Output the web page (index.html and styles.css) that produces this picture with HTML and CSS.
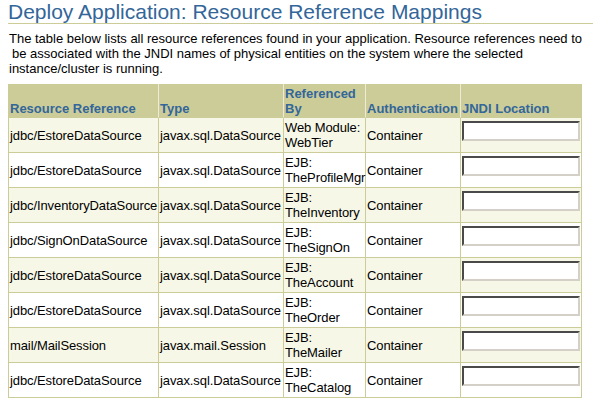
FILE: index.html
```html
<!DOCTYPE html>
<html>
<head>
<meta charset="utf-8">
<title>Deploy Application</title>
<link rel="stylesheet" href="styles.css">
</head>
<body>
<h1 class="title">Deploy Application: Resource Reference Mappings</h1>
<div class="intro">
  <div class="line">The table below lists all resource references found in your application. Resource references need to</div>
  <div class="line indent">be associated with the JNDI names of physical entities on the system where the selected</div>
  <div class="line">instance/cluster is running.</div>
</div>
<table class="map">
  <thead>
    <tr>
      <th class="c1">Resource Reference</th>
      <th class="c2">Type</th>
      <th class="c3">Referenced By</th>
      <th class="c4">Authentication</th>
      <th class="c5">JNDI Location</th>
    </tr>
  </thead>
  <tbody>
    <tr class="odd"><td>jdbc/EstoreDataSource</td><td>javax.sql.DataSource</td><td>Web Module:<br>WebTier</td><td>Container</td><td class="jndi"><input class="field" type="text"></td></tr>
    <tr><td>jdbc/EstoreDataSource</td><td>javax.sql.DataSource</td><td>EJB:<br>TheProfileMgr</td><td>Container</td><td class="jndi"><input class="field" type="text"></td></tr>
    <tr class="odd"><td>jdbc/InventoryDataSource</td><td>javax.sql.DataSource</td><td>EJB:<br>TheInventory</td><td>Container</td><td class="jndi"><input class="field" type="text"></td></tr>
    <tr><td>jdbc/SignOnDataSource</td><td>javax.sql.DataSource</td><td>EJB:<br>TheSignOn</td><td>Container</td><td class="jndi"><input class="field" type="text"></td></tr>
    <tr class="odd"><td>jdbc/EstoreDataSource</td><td>javax.sql.DataSource</td><td>EJB:<br>TheAccount</td><td>Container</td><td class="jndi"><input class="field" type="text"></td></tr>
    <tr><td>jdbc/EstoreDataSource</td><td>javax.sql.DataSource</td><td>EJB:<br>TheOrder</td><td>Container</td><td class="jndi"><input class="field" type="text"></td></tr>
    <tr class="odd"><td>mail/MailSession</td><td>javax.mail.Session</td><td>EJB:<br>TheMailer</td><td>Container</td><td class="jndi"><input class="field" type="text"></td></tr>
    <tr><td>jdbc/EstoreDataSource</td><td>javax.sql.DataSource</td><td>EJB:<br>TheCatalog</td><td>Container</td><td class="jndi"><input class="field" type="text"></td></tr>
  </tbody>
</table>
</body>
</html>
```
FILE: styles.css
```css
html, body {
  background: #ffffff;
}
body {
  margin: 0 0 0 8px;
  font-family: "Liberation Sans", Arial, sans-serif;
  font-size: 13px;
  color: #000000;
  overflow: hidden;
}
.title {
  margin: 0;
  font-size: 21px;
  font-weight: normal;
  line-height: 23px;
  color: #336699;
  border-bottom: 1px solid #cccc99;
  white-space: nowrap;
}
.intro {
  margin-top: 7px;
  line-height: 15px;
}
.line {
  white-space: nowrap;
  padding-left: 1px;
}
.line.indent {
  padding-left: 4px;
}
.map {
  margin-top: 8px;
  border-collapse: separate;
  border-spacing: 0;
  table-layout: fixed;
  width: 574px;
  border-left: 1px solid #cccc99;
}
.map th {
  box-sizing: border-box;
  background: #cccc99;
  color: #336699;
  font-weight: bold;
  text-align: left;
  vertical-align: bottom;
  line-height: 15px;
  padding: 2px 1px 1px 1px;
  border-right: 1px solid #ecebd8;
  border-bottom: 1px solid #cccc99;
}
.map th.c5 {
  border-right-color: #cccc99;
}
.c1 { width: 150px; }
.c2 { width: 125px; }
.c3 { width: 82px; }
.c4 { width: 95px; }
.c5 { width: 121px; }
.map td {
  box-sizing: border-box;
  height: 35px;
  padding: 2px 1px 2px 1px;
  line-height: 15px;
  vertical-align: middle;
  white-space: nowrap;
  overflow: visible;
  letter-spacing: -0.1px;
  border-right: 1px solid #cccc99;
  border-bottom: 1px solid #cccc99;
  background: #ffffff;
}
.map tr.odd td {
  background: #f7f7e7;
}
.map td.jndi {
  vertical-align: top;
  padding: 3px 0 0 1px;
}
.field {
  display: block;
  box-sizing: border-box;
  width: 118px;
  height: 20px;
  margin: 0;
  padding: 0 2px;
  background: #ffffff;
  border-style: solid;
  border-width: 2px;
  border-color: #4a4a4a #d4d0c8 #d4d0c8 #4a4a4a;
  font-family: "Liberation Sans", Arial, sans-serif;
  font-size: 13px;
  outline: none;
}
```
